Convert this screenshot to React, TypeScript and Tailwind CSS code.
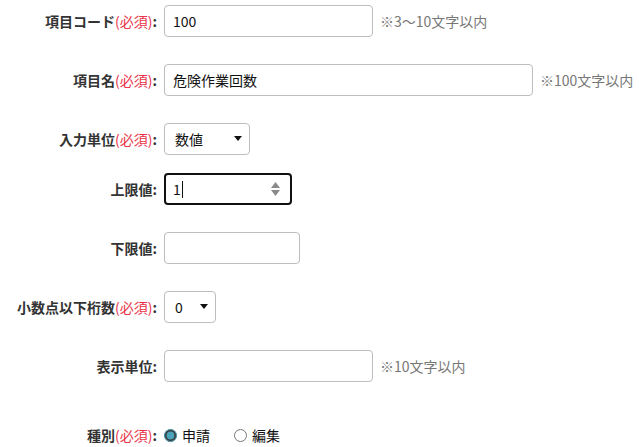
import React from "react";

const FONT = { fontFamily: "'Noto Sans CJK JP', 'Noto Sans', sans-serif" };

function Label({ text, required }: { text: string; required?: boolean }) {
  return (
    <div className="w-[157px] shrink-0 text-right text-[14px] font-bold text-[#333]">
      {text}
      {required && <span className="font-normal text-[#e8334a]">(必須)</span>}:
    </div>
  );
}

function Note({ children }: { children: React.ReactNode }) {
  return <span className="text-[14px] text-[#777]">{children}</span>;
}

function Arrow() {
  return (
    <span className="pointer-events-none absolute right-[8px] top-[13px]">
      <svg width="8" height="5" viewBox="0 0 8 5">
        <path d="M0 0h8L4 5z" fill="#111" />
      </svg>
    </span>
  );
}

export default function App() {
  return (
    <div className="min-h-[447px] w-[639px] bg-white pt-[5px]" style={FONT}>
      {/* 項目コード */}
      <div className="flex h-[32px] items-center gap-[7px]">
        <Label text="項目コード" required />
        <input
          defaultValue="100"
          className="h-[32px] w-[209px] rounded-[4px] border border-[#bdbdbd] px-[8px] text-[14px] text-[#111] outline-none"
        />
        <Note>※3〜10文字以内</Note>
      </div>

      {/* 項目名 */}
      <div className="mt-[27px] flex h-[32px] items-center gap-[7px]">
        <Label text="項目名" required />
        <input
          defaultValue="危険作業回数"
          className="h-[32px] w-[369px] rounded-[4px] border border-[#bdbdbd] px-[8px] text-[14px] text-[#111] outline-none"
        />
        <Note>※100文字以内</Note>
      </div>

      {/* 入力単位 */}
      <div className="mt-[27px] flex h-[32px] items-center gap-[7px]">
        <Label text="入力単位" required />
        <div className="relative">
          <select
            defaultValue="数値"
            className="h-[32px] w-[86px] appearance-none rounded-[4px] border border-[#bdbdbd] bg-white pl-[10px] text-[14px] text-[#111] outline-none"
          >
            <option>数値</option>
            <option>文字</option>
          </select>
          <Arrow />
        </div>
      </div>

      {/* 上限値 */}
      <div className="mt-[18px] flex h-[32px] items-center gap-[7px]">
        <Label text="上限値" />
        <div className="flex h-[32px] w-[128px] items-center rounded-[4px] border-2 border-[#111] pl-[7px] pr-[10px] text-[14px] text-[#111]">
          <span>1</span>
          <span className="ml-[1px] h-[17px] w-[1px] bg-[#111]" />
          <span className="ml-auto flex flex-col items-center gap-[2px]">
            <svg width="9" height="6" viewBox="0 0 9 6">
              <path d="M4.5 0L9 6H0z" fill="#8a8a8a" />
            </svg>
            <svg width="9" height="6" viewBox="0 0 9 6">
              <path d="M0 0h9L4.5 6z" fill="#8a8a8a" />
            </svg>
          </span>
        </div>
      </div>

      {/* 下限値 */}
      <div className="mt-[27px] flex h-[32px] items-center gap-[7px]">
        <Label text="下限値" />
        <input className="h-[32px] w-[136px] rounded-[4px] border border-[#bdbdbd] px-[8px] text-[14px] outline-none" />
      </div>

      {/* 小数点以下桁数 */}
      <div className="mt-[27px] flex h-[32px] items-center gap-[7px]">
        <Label text="小数点以下桁数" required />
        <div className="relative">
          <select
            defaultValue="0"
            className="h-[32px] w-[52px] appearance-none rounded-[4px] border border-[#bdbdbd] bg-white pl-[10px] text-[14px] text-[#111] outline-none"
          >
            <option>0</option>
            <option>1</option>
            <option>2</option>
          </select>
          <Arrow />
        </div>
      </div>

      {/* 表示単位 */}
      <div className="mt-[27px] flex h-[32px] items-center gap-[7px]">
        <Label text="表示単位" />
        <input className="h-[32px] w-[209px] rounded-[4px] border border-[#bdbdbd] px-[8px] text-[14px] outline-none" />
        <Note>※10文字以内</Note>
      </div>

      {/* 種別 */}
      <div className="mt-[43px] flex h-[20px] items-center gap-[7px]">
        <Label text="種別" required />
        <label className="flex items-center gap-[5px] text-[14px] text-[#111]">
          <input type="radio" name="kind" defaultChecked className="m-0 h-[13px] w-[13px] accent-[#4aa3b8]" />
          申請
        </label>
        <label className="ml-[17px] flex items-center gap-[5px] text-[14px] text-[#111]">
          <input type="radio" name="kind" className="m-0 h-[13px] w-[13px] accent-[#4aa3b8]" />
          編集
        </label>
      </div>
    </div>
  );
}
